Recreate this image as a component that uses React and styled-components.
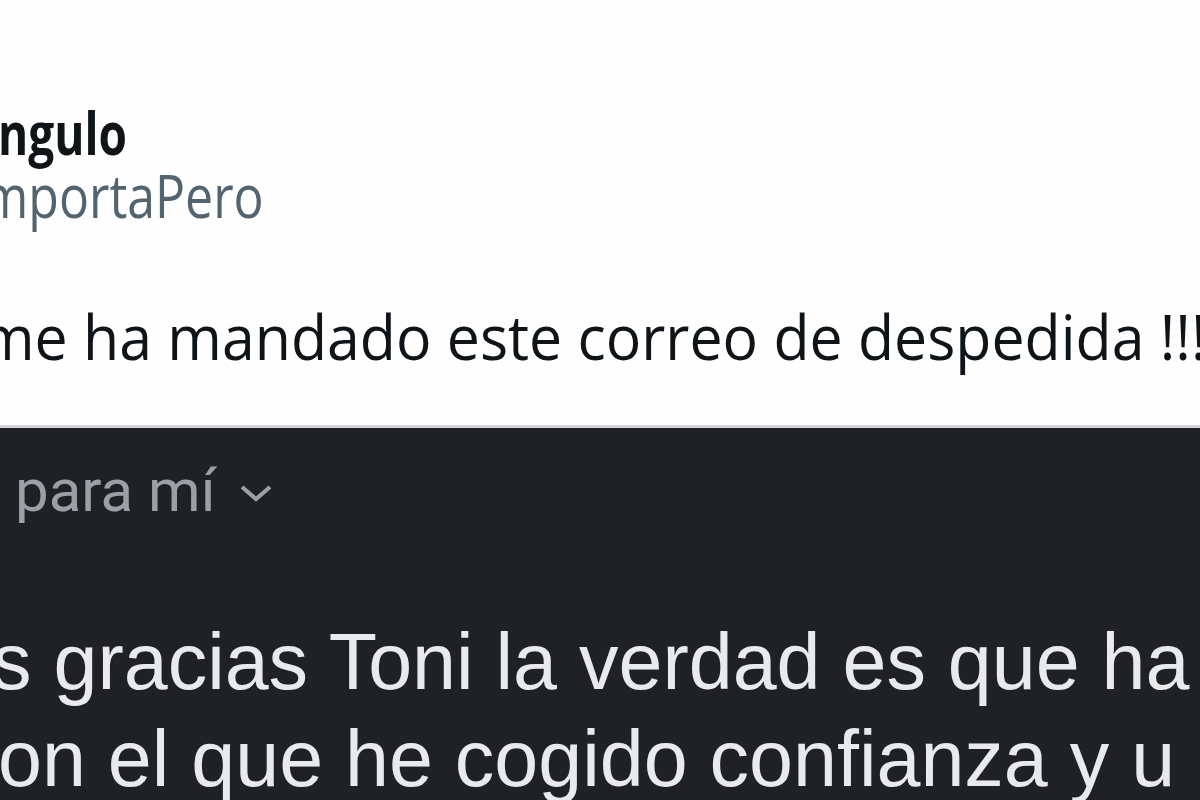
import React from "react"
import styled, { createGlobalStyle } from "styled-components"

const GlobalStyle = createGlobalStyle`
  html, body {
    margin: 0;
    padding: 0;
    background: #fff;
    overflow: hidden;
  }
`

const Page = styled.div`
  width: 1200px;
  height: 800px;
  overflow: hidden;
  display: flex;
  flex-direction: column;
`

const Tweet = styled.section`
  flex-shrink: 0;
  height: 428px;
  background: #fefefe;
  box-sizing: border-box;
  padding-top: 112px;
  font-family: "Open Sans", "Noto Sans", sans-serif;
  border-bottom: 3px solid #d3d3d3;
`

// a single unwrapped line; the screenshot is stretched a little vertically
const Line = styled.div`
  white-space: nowrap;
  margin-left: ${p => p.$shift || 0}px;
  transform: scaleY(${p => p.$stretch || 1});
  transform-origin: 0 ${p => p.$base || 0}px;
`

const Name = styled(Line)`
  font-size: 46px;
  font-weight: 700;
  color: #0f1419;
  line-height: 50px;
`

const Handle = styled(Line)`
  font-size: 50px;
  color: #536471;
  line-height: 56px;
  margin-top: 9px;
`

const Body = styled(Line)`
  font-size: 59px;
  color: #0f1419;
  line-height: 70px;
  margin-top: 75px;
`

const Mail = styled.section`
  flex: 1;
  background: #202124;
  padding-top: 28px;
  font-family: Roboto, "Liberation Sans", sans-serif;
`

const Recipient = styled.div`
  display: flex;
  align-items: center;
  gap: 24px;
  font-size: 60px;
  color: #9aa0a6;
  line-height: 70px;
  padding-left: 15px;
  white-space: nowrap;
`

const Chevron = styled.svg`
  margin-top: 4px;
`

const Message = styled.div`
  margin-top: 87px;
  color: #e8eaed;
  font-family: "Liberation Sans", Arial, sans-serif;
  font-size: 79px;
  line-height: 97px;
`

export default function App() {
  return (
    <Page>
      <GlobalStyle />
      <Tweet>
        <Name $shift={-2} $stretch={1.3} $base={43}>ngulo</Name>
        <Handle $shift={-18} $stretch={1.2} $base={47}>mportaPero</Handle>
        <Body $shift={-20} $stretch={1.05} $base={58}>me ha mandado este correo de despedida !!!</Body>
      </Tweet>
      <Mail>
        <Recipient>
          <span>para mí</span>
          <Chevron width="34" height="22" viewBox="0 0 34 22">
            <path d="M3 5 L17 17 L31 5" fill="none" stroke="#9aa0a6" strokeWidth="4" />
          </Chevron>
        </Recipient>
        <Message>
          <Line $shift={-8}>s gracias Toni la verdad es que ha</Line>
          <Line $shift={-2}>on el que he cogido confianza y u</Line>
        </Message>
      </Mail>
    </Page>
  )
}
